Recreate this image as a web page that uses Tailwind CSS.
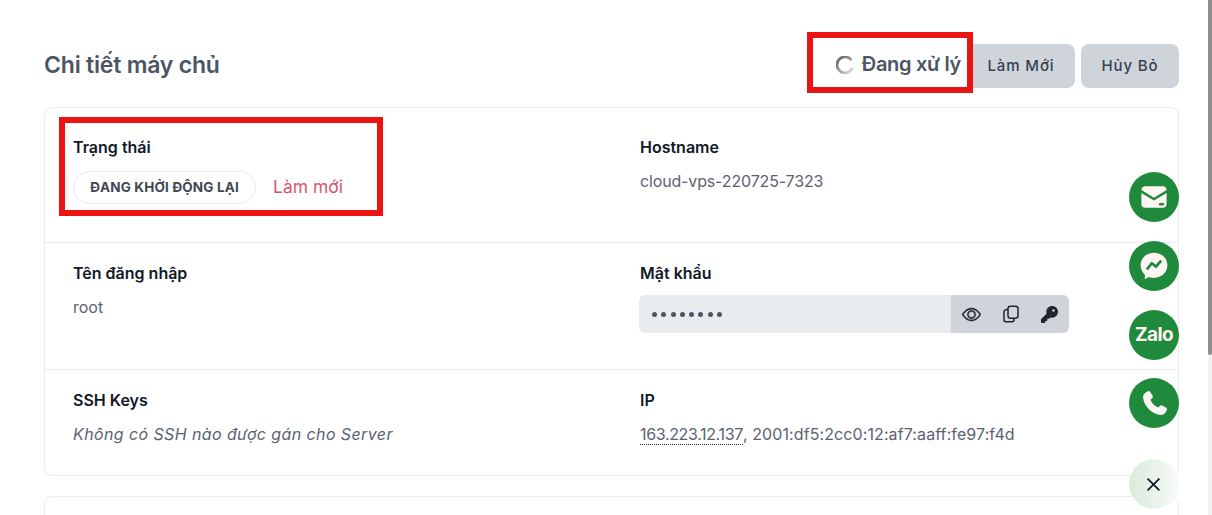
<!doctype html>
<html lang="vi">
<head>
<meta charset="utf-8">
<script src="https://cdn.jsdelivr.net/npm/@tailwindcss/browser@4"></script>
</head>
<body class="bg-white overflow-hidden">
<div class="relative flex h-[515px] w-[1212px] overflow-hidden font-['Inter','Noto_Sans',sans-serif]">
  <main class="w-[1208px] pl-[44px] pr-[29px] pt-[44px]">
    <header class="flex h-[44px] items-center justify-between">
      <h1 class="-mt-[2px] text-[23px] font-semibold tracking-[-0.2px] text-[#4b5563]">Chi tiết máy chủ</h1>
      <div class="flex items-center gap-[6px]">
        <button class="h-[44px] w-[108px] rounded-lg bg-[#ced4da] pt-[1px] text-[15px] font-medium tracking-[0.9px] text-[#374151]">Làm Mới</button>
        <button class="h-[44px] w-[98px] rounded-lg bg-[#ced4da] pt-[1px] text-[15px] font-medium tracking-[0.9px] text-[#374151]">Hủy Bỏ</button>
      </div>
    </header>

    <section class="mt-[19px] h-[369px] rounded-lg border border-[#e9ecef]">
      <div class="grid h-[135px] grid-cols-[566px_1fr] border-b border-[#e9ecef] pl-[28px] pt-[29px]">
        <div>
          <div class="text-[16px] leading-5 font-semibold text-[#111827]">Trạng thái</div>
          <div class="mt-[14px] flex items-center gap-[17px]">
            <span class="flex h-[33px] w-[183px] items-center justify-center whitespace-nowrap rounded-full border border-[#e9ecef] text-[13.5px] font-bold tracking-[0.15px] text-[#414752]">ĐANG KHỞI ĐỘNG LẠI</span>
            <span class="text-[17.5px] text-[#d9566a]">Làm mới</span>
          </div>
        </div>
        <div class="pl-px">
          <div class="text-[16px] leading-5 font-semibold text-[#111827]">Hostname</div>
          <div class="mt-[14px] text-[16px] leading-5 tracking-[-0.15px] text-[#5b6270]">cloud-vps-220725-7323</div>
        </div>
      </div>

      <div class="grid h-[127px] grid-cols-[566px_1fr] border-b border-[#e9ecef] pl-[28px] pt-[20px]">
        <div>
          <div class="text-[16px] leading-5 font-semibold text-[#111827]">Tên đăng nhập</div>
          <div class="mt-[14px] text-[16px] leading-5 text-[#5b6270]">root</div>
        </div>
        <div>
          <div class="pl-px text-[16px] leading-5 font-semibold text-[#111827]">Mật khẩu</div>
          <div class="mt-[12px] flex h-[38px] w-[430px] overflow-hidden rounded-md">
            <div class="flex flex-1 items-center bg-[#e9ecef] pl-[13px] text-[#4b5563]">
              <span class="flex gap-[4.3px]">
                <i class="size-[5px] rounded-full bg-[#4b5563]"></i><i class="size-[5px] rounded-full bg-[#4b5563]"></i><i class="size-[5px] rounded-full bg-[#4b5563]"></i><i class="size-[5px] rounded-full bg-[#4b5563]"></i><i class="size-[5px] rounded-full bg-[#4b5563]"></i><i class="size-[5px] rounded-full bg-[#4b5563]"></i><i class="size-[5px] rounded-full bg-[#4b5563]"></i><i class="size-[5px] rounded-full bg-[#4b5563]"></i>
              </span>
            </div>
            <div class="flex w-[118px] items-center justify-between bg-[#ced4da] pl-[11px] pr-[11px] text-[#212529]">
              <svg class="size-[19px]" viewBox="0 0 16 16" fill="currentColor" stroke="currentColor" stroke-width="0.35"><path d="M16 8s-3-5.500-8-5.500S0 8 0 8s3 5.500 8 5.500S16 8 16 8zM1.173 8a13.133 13.133 0 0 1 1.660-2.043C4.120 4.668 5.880 3.500 8 3.500c2.120 0 3.879 1.168 5.168 2.457A13.133 13.133 0 0 1 14.828 8c-.058.087-.122.183-.195.288-.335.480-.830 1.120-1.465 1.755C11.879 11.332 10.119 12.500 8 12.500c-2.120 0-3.879-1.168-5.168-2.457A13.134 13.134 0 0 1 1.172 8z"/><path d="M8 5.500a2.500 2.500 0 1 0 0 5 2.500 2.500 0 0 0 0-5zM4.500 8a3.500 3.500 0 1 1 7 0 3.500 3.500 0 0 1-7 0z"/></svg>
              <svg class="size-[18px]" viewBox="0 0 18 18" fill="none" stroke="currentColor" stroke-width="1.5"><rect x="6" y="1.200" width="10" height="12" rx="2.400"/><path d="M6 4.600H4.400A2.400 2.400 0 0 0 2 7v7.400a2.400 2.400 0 0 0 2.400 2.400h5.200a2.400 2.400 0 0 0 2.400-2.400v-1"/></svg>
              <svg class="size-[17px]" viewBox="0 0 512 512" fill="currentColor"><path d="M336 352c97.200 0 176-78.800 176-176S433.200 0 336 0S160 78.800 160 176c0 18.700 2.900 36.800 8.300 53.700L7 391c-4.500 4.500-7 10.600-7 17v80c0 13.300 10.700 24 24 24h80c13.300 0 24-10.700 24-24V448h40c13.300 0 24-10.700 24-24V384h40c6.400 0 12.500-2.500 17-7l33.300-33.300c16.900 5.400 35 8.300 53.700 8.300zM376 96a40 40 0 1 1 0 80 40 40 0 1 1 0-80z"/></svg>
            </div>
          </div>
        </div>
      </div>

      <div class="grid grid-cols-[566px_1fr] pl-[28px] pt-[20px]">
        <div>
          <div class="text-[16px] leading-5 font-semibold text-[#111827]">SSH Keys</div>
          <div class="mt-[14px] text-[16px] leading-5 italic tracking-[0.4px] text-[#5b6270]">Không có SSH nào được gán cho Server</div>
        </div>
        <div class="pl-px">
          <div class="text-[16px] leading-5 font-semibold text-[#111827]">IP</div>
          <div class="mt-[14px] text-[16px] leading-5 tracking-[0.1px] text-[#5b6270]"><span class="border-b border-dotted border-[#212529] tracking-[-0.35px]">163.223.12.137</span>, 2001:df5:2cc0:12:af7:aaff:fe97:f4d</div>
        </div>
      </div>
    </section>

    <section class="mt-[20px] h-[100px] rounded-lg border border-[#e9ecef]"></section>
  </main>

  <div class="h-[515px] w-[4px] bg-[#f1f1f1]"><div class="h-[355px] rounded-b-sm bg-[#8f8f8f]"></div></div>

  <!-- red annotation: processing indicator -->
  <div class="absolute left-[807px] top-[32px] flex h-[61px] w-[166px] items-center justify-end gap-[8px] border-[6px] border-[#ec1313] bg-white pr-[6px] pt-[3px]">
    <svg class="size-[18px] mt-[1px]" viewBox="0 0 18 18" fill="none" stroke-width="2.800"><defs><linearGradient id="spin" x1="0" y1="0" x2="1" y2="1"><stop offset="0" stop-color="#555b63"/><stop offset="1" stop-color="#dcdfe3"/></linearGradient></defs><path d="M15.500 4.200A8 8 0 1 0 16.400 12" stroke="url(#spin)"/></svg>
    <span class="whitespace-nowrap text-[20px] font-semibold tracking-[-0.3px] text-[#4b5563]">Đang xử lý</span>
  </div>
  <!-- red annotation: status block -->
  <div class="absolute left-[59px] top-[117px] h-[99px] w-[324px] border-[6px] border-[#ec1313]"></div>

  <!-- floating contact buttons -->
  <div class="absolute left-[1129px] top-[172px] flex size-[50px] items-center justify-center rounded-full bg-[#1f8a3c]">
    <svg class="size-[36px]" viewBox="0 0 30 30"><path fill="#fff5f2" d="M4.500 9.200c0-1.900 1.500-3.200 3.300-3.200h14.400c1.800 0 3.300 1.300 3.300 3.200L15 15.600z"/><path fill="#fff5f2" d="M4.500 11.600 15 18l10.500-6.400V21c0 1.700-1.400 3-3.100 3H7.600c-1.700 0-3.100-1.300-3.100-3z"/><rect x="19" y="20" width="4.500" height="2" rx="1" fill="#1f8a3c"/></svg>
  </div>
  <div class="absolute left-[1129px] top-[241px] flex size-[50px] items-center justify-center rounded-full bg-[#1f8a3c]">
    <svg class="size-[34px]" viewBox="0 0 30 30"><path fill="#fff5f2" d="M15 3.200C8.300 3.200 3.200 8 3.200 14.400c0 3.400 1.400 6.300 3.700 8.300v4.100l3.700-2.100c1.400.5 2.900.8 4.400.8 6.700 0 11.800-4.800 11.800-11.100S21.700 3.200 15 3.200z"/><path fill="none" stroke="#1f8a3c" stroke-width="2.400" stroke-linejoin="round" d="m8.700 18 4.300-5.400 3.800 2.900 4.500-5.300"/></svg>
  </div>
  <div class="absolute left-[1129px] top-[310px] flex size-[50px] items-center justify-center rounded-full bg-[#1f8a3c]">
    <span class="text-[19px] font-bold tracking-[-0.6px] text-[#fff5f2]">Zalo</span>
  </div>
  <div class="absolute left-[1129px] top-[378px] flex size-[50px] items-center justify-center rounded-full bg-[#1f8a3c]">
    <svg class="size-[29px]" viewBox="0 0 24 24"><path fill="#fff5f2" d="M6.600 1.800c.7-.3 1.400-.1 1.800.5l2 3.300c.4.600.3 1.300-.2 1.800L8.700 8.900c1 2.800 3.500 5.400 6.400 6.400l1.500-1.500c.5-.5 1.200-.6 1.800-.2l3.300 2c.6.400.8 1.100.5 1.800-.8 2-2.400 4.100-4.800 4.100C10.200 21.200 2.800 13.800 2.500 6.600c0-2.400 2.100-4 4.100-4.800z"/></svg>
  </div>
  <div class="absolute left-[1129px] top-[459px] flex size-[50px] items-center justify-center rounded-full bg-gradient-to-r from-[#d9ebdc] to-[#f7fbf7] pr-[1px]">
    <svg class="size-[15px]" viewBox="0 0 14 14" fill="none" stroke="#111827" stroke-width="1.600"><path d="M1.500 1.500 12.500 12.500M12.500 1.500 1.500 12.500"/></svg>
  </div>
</div>
</body>
</html>
